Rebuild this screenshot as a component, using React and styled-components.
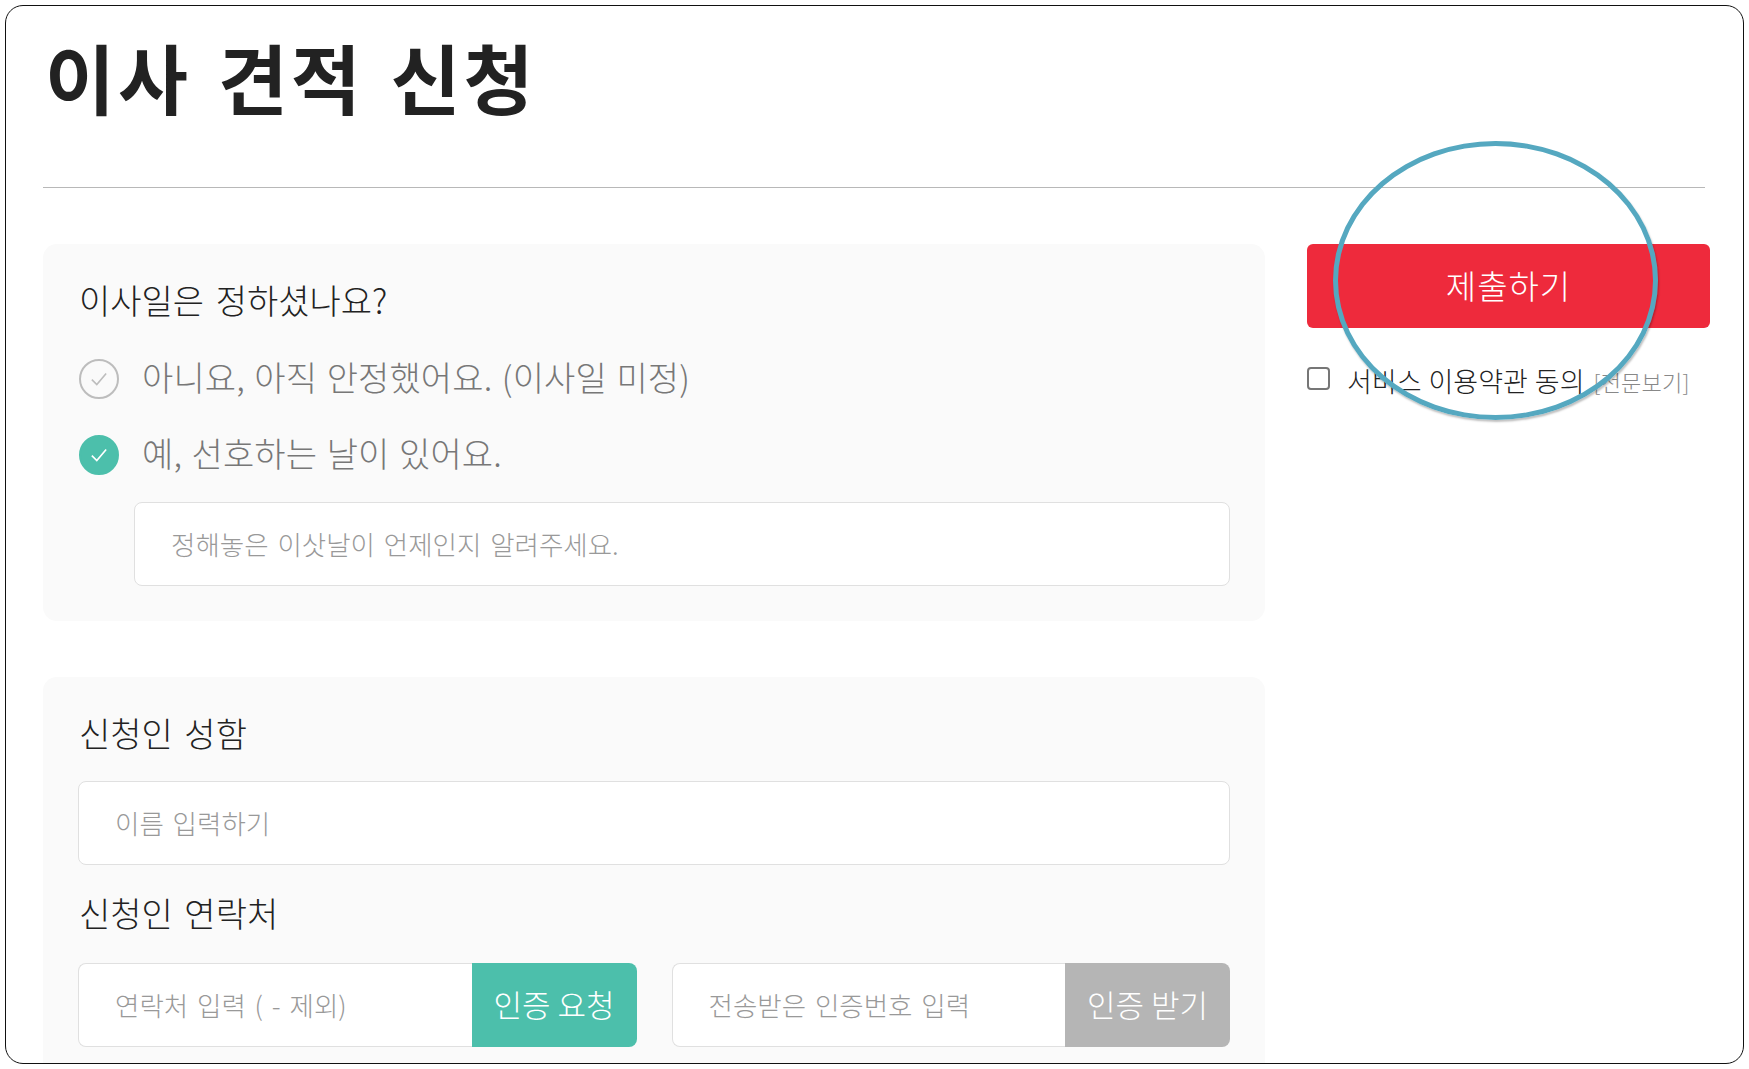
import styled, { createGlobalStyle } from "styled-components"

const GlobalStyle = createGlobalStyle`
    html, body {
        margin: 0;
        padding: 0;
        background: #fff;
        font-family: "Noto Sans CJK KR", "Noto Sans", sans-serif;
    }
    * { box-sizing: border-box; }
`

const CheckIcon = ({ color }) => (
    <svg width="22" height="22" viewBox="0 0 20 20" fill="none">
        <path d="M3.5 10.5 L8 15 L16.5 5" stroke={color} strokeWidth="1.5" />
    </svg>
)

const App = () => {
    return <>
        <GlobalStyle />
        <Frame>
            <Title>이사 견적 신청</Title>
            <Divider />
            <Columns>
                <Main>
                    <Panel>
                        <Label $below="36px">이사일은 정하셨나요?</Label>
                        <OptionRow>
                            <Radio><CheckIcon color="#bdbdbd" /></Radio>
                            <OptionText>아니요, 아직 안정했어요. (이사일 미정)</OptionText>
                        </OptionRow>
                        <OptionRow>
                            <Radio $checked><CheckIcon color="#fff" /></Radio>
                            <OptionText>예, 선호하는 날이 있어요.</OptionText>
                        </OptionRow>
                        <DateInput placeholder="정해놓은 이삿날이 언제인지 알려주세요." />
                    </Panel>
                    <Panel $last>
                        <Label $below="25px">신청인 성함</Label>
                        <TextInput placeholder="이름 입력하기" />
                        <Label $above="25px" $below="27px">신청인 연락처</Label>
                        <VerifyRow>
                            <VerifyGroup>
                                <VerifyInput placeholder="연락처 입력 ( - 제외)" />
                                <VerifyButton type="button" $color="#4cbfab">인증 요청</VerifyButton>
                            </VerifyGroup>
                            <VerifyGroup>
                                <VerifyInput placeholder="전송받은 인증번호 입력" />
                                <VerifyButton type="button" $color="#b5b5b5">인증 받기</VerifyButton>
                            </VerifyGroup>
                        </VerifyRow>
                    </Panel>
                </Main>
                <Side>
                    <SubmitButton type="button">제출하기</SubmitButton>
                    <AgreeRow>
                        <AgreeBox />
                        <AgreeText>서비스 이용약관 동의</AgreeText>
                        <AgreeLink>[전문보기]</AgreeLink>
                    </AgreeRow>
                </Side>
            </Columns>
            <Highlight />
        </Frame>
    </>
}

const Frame = styled.div`
    position: relative;
    width: 1739px;
    height: 1059px;
    margin: 5px 0 0 5px;
    padding: 0 37px;
    border: 1px solid #111;
    border-radius: 18px;
    overflow: hidden;
    background: #fff;
`
const Title = styled.h1`
    margin: 0;
    height: 181px;
    padding: 20px 0 0 2px;
    font-size: 76px;
    line-height: 100px;
    font-weight: 700;
    letter-spacing: 3.2px;
    word-spacing: 6px;
    color: #222;
`
const Divider = styled.div`
    width: 1662px;
    height: 1px;
    background: #b8b8b8;
`
const Columns = styled.div`
    display: flex;
    align-items: flex-start;
    gap: 42px;
    margin-top: 56px;
`
const Main = styled.div`
    width: 1222px;
    flex-shrink: 0;
`
const Panel = styled.section`
    background: #fafafa;
    border-radius: 14px;
    padding: 33px 35px 35px 35px;
    margin-bottom: 56px;
    height: ${props => props.$last ? "420px" : "377px"};
`
const Label = styled.div`
    font-size: 34px;
    line-height: 46px;
    font-weight: 300;
    letter-spacing: 0;
    word-spacing: 4px;
    padding-left: 1px;
    color: #222;
    margin-top: ${props => props.$above || "0"};
    margin-bottom: ${props => props.$below};
`
const OptionRow = styled.div`
    display: flex;
    align-items: center;
    gap: 23px;
    height: 40px;
    margin-bottom: 36px;
`
const Radio = styled.span`
    display: flex;
    align-items: center;
    justify-content: center;
    width: 40px;
    height: 40px;
    margin-left: 1px;
    border-radius: 50%;
    border: 2px solid ${props => props.$checked ? "#4cbfab" : "#bdbdbd"};
    background: ${props => props.$checked ? "#4cbfab" : "transparent"};
`
const OptionText = styled.span`
    font-size: 34px;
    line-height: 40px;
    padding-bottom: 5px;
    font-weight: 300;
    letter-spacing: 0.1px;
    word-spacing: 2px;
    color: #777;
`
const TextInput = styled.input`
    display: block;
    width: 100%;
    height: 84px;
    padding: 0 36px 2px;
    border: 1px solid #e0e0e0;
    border-radius: 8px;
    background: #fff;
    font-family: inherit;
    font-size: 26.5px;
    font-weight: 300;
    word-spacing: 3px;
    outline: none;
    &::placeholder { color: #999; opacity: 1; }
`
const DateInput = styled(TextInput)`
    width: 1096px;
    margin: -9px 0 0 56px;
`
const VerifyRow = styled.div`
    display: flex;
    gap: 35px;
`
const VerifyGroup = styled.div`
    display: flex;
    flex: 1;
    height: 84px;
`
const VerifyInput = styled(TextInput)`
    flex: 1;
    min-width: 0;
    border-right: none;
    border-radius: 8px 0 0 8px;
`
const VerifyButton = styled.button`
    width: 165px;
    border: none;
    border-radius: 0 8px 8px 0;
    background: ${props => props.$color};
    color: #fff;
    font-family: inherit;
    font-size: 31px;
    font-weight: 300;
    padding: 0 0 3px;
`
const Side = styled.aside`
    width: 403px;
    flex-shrink: 0;
`
const SubmitButton = styled.button`
    display: block;
    width: 100%;
    height: 84px;
    border: none;
    border-radius: 6px;
    background: #ee2a3c;
    color: #fff;
    font-family: inherit;
    font-size: 33px;
    font-weight: 300;
    letter-spacing: 1px;
    padding: 0 0 3px 0;
`
const AgreeRow = styled.div`
    display: flex;
    align-items: center;
    margin-top: 33px;
`
const AgreeBox = styled.span`
    width: 23px;
    height: 23px;
    margin: -5px 17px 0 0;
    border: 2px solid #767676;
    border-radius: 4px;
    background: #fff;
`
const AgreeText = styled.span`
    font-size: 27px;
    font-weight: 300;
    word-spacing: 1px;
    color: #222;
    margin-right: 9px;
`
const AgreeLink = styled.span`
    font-size: 22px;
    font-weight: 300;
    letter-spacing: 0.2px;
    color: #888;
`
const Highlight = styled.div`
    position: absolute;
    left: 1327px;
    top: 135px;
    width: 325px;
    height: 279px;
    border: 5px solid #55a8c0;
    border-radius: 50%;
    box-shadow: 1px 2px 2px rgba(0, 0, 0, 0.25);
    pointer-events: none;
`

export default App
